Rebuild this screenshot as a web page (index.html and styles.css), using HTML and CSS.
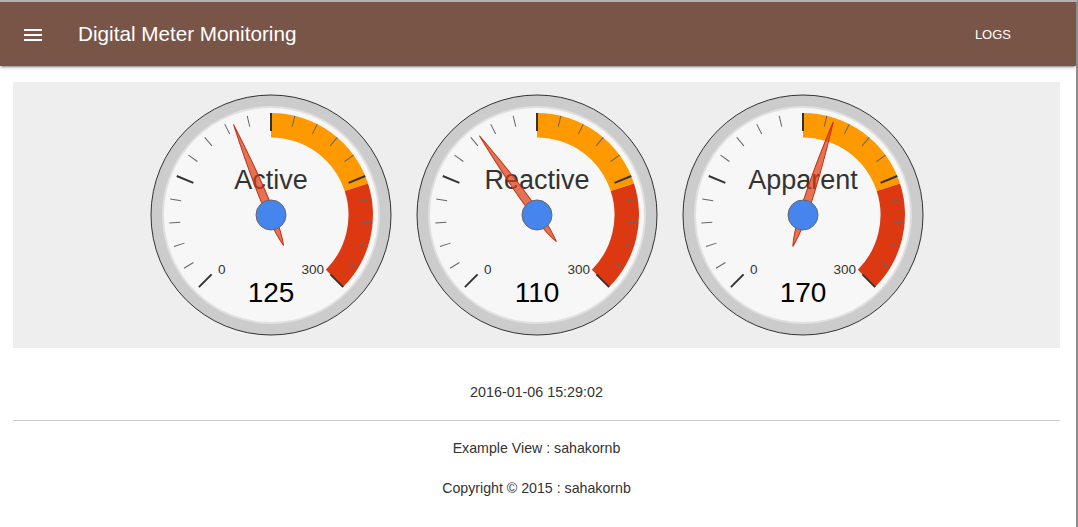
FILE: index.html
```html
<!DOCTYPE html>
<html>
<head>
<meta charset="utf-8">
<title>Digital Meter Monitoring</title>
<link rel="stylesheet" href="styles.css">
</head>
<body>
<div class="frame">
  <header class="header">
    <svg class="menu-icon" width="24" height="24" viewBox="0 0 24 24"><path d="M3 6h18v2H3zM3 11h18v2H3zM3 16h18v2H3z" fill="#fff"/></svg>
    <span class="title">Digital Meter Monitoring</span>
    <span class="spacer"></span>
    <a class="nav-link">LOGS</a>
  </header>
  <main class="main">
    <section class="panel">
      <svg class="gauge" width="266" height="266" viewBox="-133 -133 266 266">
        <circle r="120" fill="#ccc" stroke="#333" stroke-width="1"/>
        <circle r="108" fill="#f7f7f7" stroke="#e0e0e0" stroke-width="2"/>
        <path d="M0,-102 A102,102 0 0 1 97.01,-31.52 L73.71,-23.95 A77.5,77.5 0 0 0 0,-77.5 Z" fill="#f90"/>
        <path d="M97.01,-31.52 A102,102 0 0 1 72.12,72.12 L54.8,54.8 A77.5,77.5 0 0 0 73.71,-23.95 Z" fill="#dc3912"/>
        <g stroke="#666" stroke-width="1">
          <line y1="-91" y2="-102" transform="rotate(-121.5)"/><line y1="-91" y2="-102" transform="rotate(-108)"/><line y1="-91" y2="-102" transform="rotate(-94.5)"/><line y1="-91" y2="-102" transform="rotate(-81)"/>
          <line y1="-91" y2="-102" transform="rotate(-54)"/><line y1="-91" y2="-102" transform="rotate(-40.5)"/><line y1="-91" y2="-102" transform="rotate(-27)"/><line y1="-91" y2="-102" transform="rotate(-13.5)"/>
          <line y1="-91" y2="-102" transform="rotate(13.5)"/><line y1="-91" y2="-102" transform="rotate(27)"/><line y1="-91" y2="-102" transform="rotate(40.5)"/><line y1="-91" y2="-102" transform="rotate(54)"/>
          <line y1="-91" y2="-102" transform="rotate(81)"/><line y1="-91" y2="-102" transform="rotate(94.5)"/><line y1="-91" y2="-102" transform="rotate(108)"/><line y1="-91" y2="-102" transform="rotate(121.5)"/>
        </g>
        <g stroke="#333" stroke-width="2">
          <line y1="-84" y2="-102" transform="rotate(-135)"/><line y1="-84" y2="-102" transform="rotate(-67.5)"/><line y1="-84" y2="-102"/><line y1="-84" y2="-102" transform="rotate(67.5)"/><line y1="-84" y2="-102" transform="rotate(135)"/>
        </g>
        <text class="tick-label" x="-53" y="58.5" text-anchor="start">0</text>
        <text class="tick-label" x="53" y="58.5" text-anchor="end">300</text>
        <text class="gauge-label" x="0" y="-26.5" text-anchor="middle">Active</text>
        <text class="gauge-value" x="0" y="87" text-anchor="middle">125</text>
        <path transform="rotate(-22.5)" d="M0,-98 Q8,0 0,33 Q-8,0 0,-98 Z" fill="#dc3912" fill-opacity="0.7" stroke="#c63310" stroke-width="1"/>
        <circle r="15" fill="#4684ee" stroke="#666" stroke-width="1"/>
      </svg>
      <svg class="gauge" width="266" height="266" viewBox="-133 -133 266 266">
        <circle r="120" fill="#ccc" stroke="#333" stroke-width="1"/>
        <circle r="108" fill="#f7f7f7" stroke="#e0e0e0" stroke-width="2"/>
        <path d="M0,-102 A102,102 0 0 1 97.01,-31.52 L73.71,-23.95 A77.5,77.5 0 0 0 0,-77.5 Z" fill="#f90"/>
        <path d="M97.01,-31.52 A102,102 0 0 1 72.12,72.12 L54.8,54.8 A77.5,77.5 0 0 0 73.71,-23.95 Z" fill="#dc3912"/>
        <g stroke="#666" stroke-width="1">
          <line y1="-91" y2="-102" transform="rotate(-121.5)"/><line y1="-91" y2="-102" transform="rotate(-108)"/><line y1="-91" y2="-102" transform="rotate(-94.5)"/><line y1="-91" y2="-102" transform="rotate(-81)"/>
          <line y1="-91" y2="-102" transform="rotate(-54)"/><line y1="-91" y2="-102" transform="rotate(-40.5)"/><line y1="-91" y2="-102" transform="rotate(-27)"/><line y1="-91" y2="-102" transform="rotate(-13.5)"/>
          <line y1="-91" y2="-102" transform="rotate(13.5)"/><line y1="-91" y2="-102" transform="rotate(27)"/><line y1="-91" y2="-102" transform="rotate(40.5)"/><line y1="-91" y2="-102" transform="rotate(54)"/>
          <line y1="-91" y2="-102" transform="rotate(81)"/><line y1="-91" y2="-102" transform="rotate(94.5)"/><line y1="-91" y2="-102" transform="rotate(108)"/><line y1="-91" y2="-102" transform="rotate(121.5)"/>
        </g>
        <g stroke="#333" stroke-width="2">
          <line y1="-84" y2="-102" transform="rotate(-135)"/><line y1="-84" y2="-102" transform="rotate(-67.5)"/><line y1="-84" y2="-102"/><line y1="-84" y2="-102" transform="rotate(67.5)"/><line y1="-84" y2="-102" transform="rotate(135)"/>
        </g>
        <text class="tick-label" x="-53" y="58.5" text-anchor="start">0</text>
        <text class="tick-label" x="53" y="58.5" text-anchor="end">300</text>
        <text class="gauge-label" x="0" y="-26.5" text-anchor="middle">Reactive</text>
        <text class="gauge-value" x="0" y="87" text-anchor="middle">110</text>
        <path transform="rotate(-36)" d="M0,-98 Q8,0 0,33 Q-8,0 0,-98 Z" fill="#dc3912" fill-opacity="0.7" stroke="#c63310" stroke-width="1"/>
        <circle r="15" fill="#4684ee" stroke="#666" stroke-width="1"/>
      </svg>
      <svg class="gauge" width="266" height="266" viewBox="-133 -133 266 266">
        <circle r="120" fill="#ccc" stroke="#333" stroke-width="1"/>
        <circle r="108" fill="#f7f7f7" stroke="#e0e0e0" stroke-width="2"/>
        <path d="M0,-102 A102,102 0 0 1 97.01,-31.52 L73.71,-23.95 A77.5,77.5 0 0 0 0,-77.5 Z" fill="#f90"/>
        <path d="M97.01,-31.52 A102,102 0 0 1 72.12,72.12 L54.8,54.8 A77.5,77.5 0 0 0 73.71,-23.95 Z" fill="#dc3912"/>
        <g stroke="#666" stroke-width="1">
          <line y1="-91" y2="-102" transform="rotate(-121.5)"/><line y1="-91" y2="-102" transform="rotate(-108)"/><line y1="-91" y2="-102" transform="rotate(-94.5)"/><line y1="-91" y2="-102" transform="rotate(-81)"/>
          <line y1="-91" y2="-102" transform="rotate(-54)"/><line y1="-91" y2="-102" transform="rotate(-40.5)"/><line y1="-91" y2="-102" transform="rotate(-27)"/><line y1="-91" y2="-102" transform="rotate(-13.5)"/>
          <line y1="-91" y2="-102" transform="rotate(13.5)"/><line y1="-91" y2="-102" transform="rotate(27)"/><line y1="-91" y2="-102" transform="rotate(40.5)"/><line y1="-91" y2="-102" transform="rotate(54)"/>
          <line y1="-91" y2="-102" transform="rotate(81)"/><line y1="-91" y2="-102" transform="rotate(94.5)"/><line y1="-91" y2="-102" transform="rotate(108)"/><line y1="-91" y2="-102" transform="rotate(121.5)"/>
        </g>
        <g stroke="#333" stroke-width="2">
          <line y1="-84" y2="-102" transform="rotate(-135)"/><line y1="-84" y2="-102" transform="rotate(-67.5)"/><line y1="-84" y2="-102"/><line y1="-84" y2="-102" transform="rotate(67.5)"/><line y1="-84" y2="-102" transform="rotate(135)"/>
        </g>
        <text class="tick-label" x="-53" y="58.5" text-anchor="start">0</text>
        <text class="tick-label" x="53" y="58.5" text-anchor="end">300</text>
        <text class="gauge-label" x="0" y="-26.5" text-anchor="middle">Apparent</text>
        <text class="gauge-value" x="0" y="87" text-anchor="middle">170</text>
        <path transform="rotate(18)" d="M0,-98 Q8,0 0,33 Q-8,0 0,-98 Z" fill="#dc3912" fill-opacity="0.7" stroke="#c63310" stroke-width="1"/>
        <circle r="15" fill="#4684ee" stroke="#666" stroke-width="1"/>
      </svg>
    </section>
    <p class="timestamp">2016-01-06 15:29:02</p>
    <hr class="divider">
    <p class="footer-line">Example View : sahakornb</p>
    <p class="footer-line copyright">Copyright © 2015 : sahakornb</p>
  </main>
</div>
</body>
</html>
```
FILE: styles.css
```css
html, body {
  margin: 0;
  padding: 0;
  background: #fff;
}

body {
  font-family: "Liberation Sans", Arial, sans-serif;
  color: #333;
  overflow: hidden;
}

.frame {
  width: 1078px;
  height: 527px;
  box-sizing: border-box;
  border-top: 2px solid #b3b3b3;
  border-right: 2px solid #8c8c8c;
  overflow: hidden;
}

.header {
  height: 64px;
  background: #795548;
  display: flex;
  align-items: center;
  box-shadow: 0 2px 2px 0 rgba(0,0,0,.14), 0 3px 1px -2px rgba(0,0,0,.2), 0 1px 5px 0 rgba(0,0,0,.12);
  position: relative;
  z-index: 1;
}

.menu-icon {
  margin-left: 21px;
  margin-top: 2px;
  flex: none;
}

.title {
  margin-left: 33px;
  color: #fff;
  font-size: 20.7px;
  white-space: nowrap;
}

.spacer {
  flex: 1;
}

.nav-link {
  color: #fff;
  font-size: 13px;
  margin-right: 65px;
  margin-top: 1px;
}

.main {
  padding: 16px 16px 0 13px;
}

.panel {
  background: #eee;
  height: 266px;
  display: flex;
  justify-content: center;
}

.gauge {
  display: block;
  flex: none;
}

.tick-label {
  font-family: "Liberation Sans", Arial, sans-serif;
  font-size: 13.5px;
  fill: #333;
}

.gauge-label {
  font-family: "Liberation Sans", Arial, sans-serif;
  font-size: 27px;
  fill: #333;
}

.gauge-value {
  font-family: "Liberation Sans", Arial, sans-serif;
  font-size: 28px;
  fill: #000;
}

.timestamp {
  margin: 36px 0 0;
  font-size: 14.3px;
  line-height: 16px;
  text-align: center;
}

.divider {
  margin: 20px 0 0;
  border: 0;
  border-top: 1px solid #ccc;
  height: 0;
}

.footer-line {
  margin: 19px 0 0;
  font-size: 14.2px;
  line-height: 16px;
  text-align: center;
}

.copyright {
  margin-top: 24px;
}
```
